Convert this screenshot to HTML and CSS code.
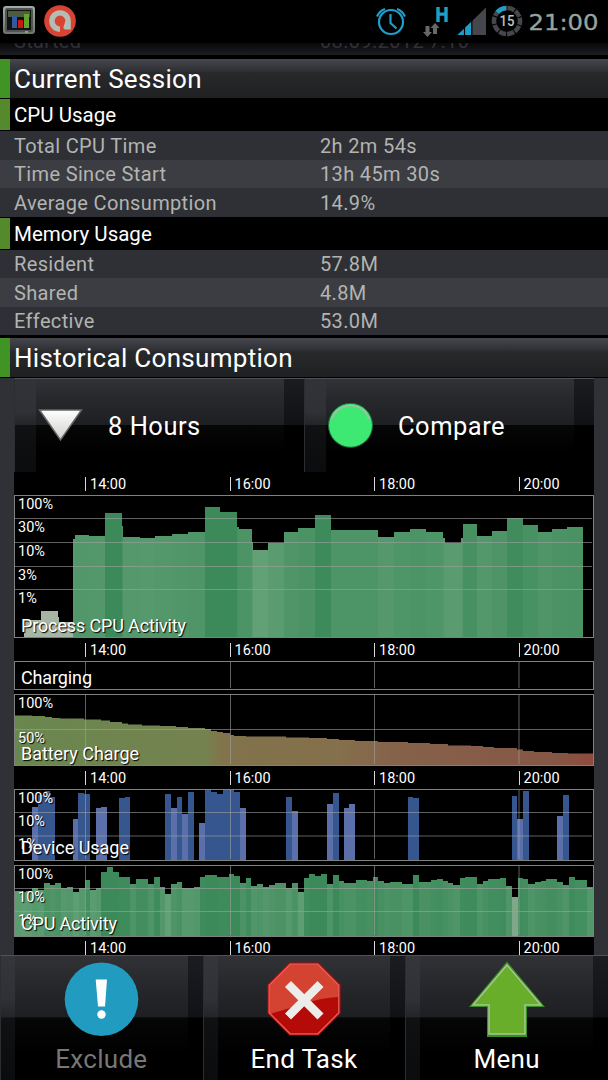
FILE: index.html
```html
<!DOCTYPE html>
<html lang="en">
<head>
  <meta charset="UTF-8">
  <meta name="viewport" content="width=device-width, initial-scale=1.0">
  <title>Process Details</title>
  <link rel="stylesheet" href="styles.css">
</head>
<body>
  <header class="status-bar">
    <div class="status-group">
      <svg width="34" height="30" viewBox="0 0 34 30">
        <defs>
          <linearGradient id="frame" x1="0" y1="0" x2="0" y2="1">
            <stop offset="0" stop-color="#a2aaa6"/>
            <stop offset="1" stop-color="#6c7370"/>
          </linearGradient>
        </defs>
        <rect x="1" y="1" width="32" height="28" rx="3" fill="url(#frame)"/>
        <rect x="3" y="3" width="28" height="24" rx="2" fill="#505553"/>
        <rect x="5" y="5" width="24" height="20" fill="#101311"/>
        <rect x="6" y="6" width="22" height="6" fill="#4e5c3c"/>
        <rect x="10" y="11" width="5" height="12" fill="#31599e"/>
        <rect x="16" y="15" width="5" height="8" fill="#c91a12"/>
        <rect x="22" y="9" width="5" height="14" fill="#62a52c"/>
        <rect x="23" y="26" width="3" height="2" fill="#8caf3e"/>
      </svg>
      <svg width="32" height="32" viewBox="0 0 32 32">
        <circle cx="16" cy="16" r="15.8" fill="#d94334"/>
        <circle cx="16" cy="16" r="8.1" fill="none" stroke="#b4bdb4" stroke-width="5.4" stroke-dasharray="38.2 12.7" transform="rotate(90 16 16)"/>
        <path d="M21.4 15.900H26.800V24.500H21.400Q19.400 24.500 19.400 22Z" fill="#b4bdb4"/>
      </svg>
    </div>
    <svg class="status-icons" width="240" height="43" viewBox="368 0 240 43">
      <g fill="none" stroke="#1e9fca" stroke-width="2.2">
        <circle cx="391" cy="22" r="12"/>
        <path d="M390.5 14V23L396.500 28.500M377 16.500Q379.500 11 385 9M405 16.500Q402.500 11 397 9"/>
      </g>
      <path d="M436.300 7h3.400v5.500h4.600V7h3.400v15h-3.400v-6.300h-4.600V22h-3.400z" fill="#1e9fca"/>
      <path d="M425.500 26h4v6h2.500l-4.500 5-4.500-5h2.500zM433 34h4v-6h2.500l-4.500-5-4.500 5h2.500z" fill="#66696a"/>
      <path d="M457.500 35L486 7.500V35z" fill="#46474c"/>
      <path d="M457.500 35L471.500 21.500V35z" fill="#1e9fca"/>
      <path d="M464.500 26V35M471.800 20V35" stroke="#000" stroke-width="1.200"/>
      <circle cx="507" cy="21" r="13" fill="none" stroke="#46474c" stroke-width="4.600" stroke-dasharray="7.150 1.019" transform="rotate(-87 507 21)"/>
      <path d="M497.300 12.300A13 13 0 0 1 506 8" fill="none" stroke="#1e9fca" stroke-width="4.600"/>
      <text x="499.500" y="26" class="battery-text" textLength="15" lengthAdjust="spacingAndGlyphs">15</text>
      <text x="528.500" y="29.500" class="clock-text" textLength="70" lengthAdjust="spacingAndGlyphs">21:00</text>
    </svg>
  </header>

  <main>
    <div class="row row-cut"><span>Started</span><span>08.09.2012 7:10</span></div>

    <h2 class="section-title">Current Session</h2>
    <h3 class="sub-title">CPU Usage</h3>
    <div class="rows">
      <div class="row"><span>Total CPU Time</span><span>2h 2m 54s</span></div>
      <div class="row"><span>Time Since Start</span><span>13h 45m 30s</span></div>
      <div class="row"><span>Average Consumption</span><span>14.9%</span></div>
    </div>
    <h3 class="sub-title">Memory Usage</h3>
    <div class="rows">
      <div class="row"><span>Resident</span><span>57.8M</span></div>
      <div class="row"><span>Shared</span><span>4.8M</span></div>
      <div class="row"><span>Effective</span><span>53.0M</span></div>
    </div>

    <h2 class="section-title history-title">Historical Consumption</h2>
    <div class="history">
      <div class="panel-buttons">
        <button class="panel-button">
          <svg width="46" height="46" viewBox="0 0 46 46">
            <defs>
              <linearGradient id="tri" x1="0" y1="0" x2="0" y2="1">
                <stop offset="0" stop-color="#fff"/>
                <stop offset="1" stop-color="#cfcfcb"/>
              </linearGradient>
            </defs>
            <path d="M2.500 7H44.500L23.500 37Z" fill="url(#tri)" stroke="#666" stroke-width="1.500"/>
          </svg>
          <span>8 Hours</span>
        </button>
        <button class="panel-button">
          <svg width="46" height="46" viewBox="0 0 46 46">
            <circle cx="23.500" cy="22.300" r="22" fill="#3de873" stroke="#1d6b38" stroke-width="1"/>
            <path d="M5 16A19.500 19.500 0 0 1 42 16" fill="none" stroke="#9cc0a3" stroke-width="1.800"/>
          </svg>
          <span>Compare</span>
        </button>
      </div>

      <div class="axis"><span>14:00</span><span>16:00</span><span>18:00</span><span>20:00</span></div>

      <div class="charts">
        <svg width="580" height="143" viewBox="14 495 580 143">
          <g id="process-bars"></g>
          <path class="grid" d="M15 518.500H592M15 542.500H592M15 566.500H592M15 589.500H592"/>
          <rect class="frame" x="14.500" y="495.500" width="579" height="142"/>
          <g class="scale">
            <text x="18" y="509">100%</text>
            <text x="18" y="532">30%</text>
            <text x="18" y="555.500">10%</text>
            <text x="18" y="580">3%</text>
            <text x="18" y="602.500">1%</text>
          </g>
          <text class="name" x="21" y="632" textLength="165">Process CPU Activity</text>
        </svg>
      </div>

      <div class="axis"><span>14:00</span><span>16:00</span><span>18:00</span><span>20:00</span></div>

      <div class="charts">
        <svg width="580" height="29" viewBox="14 661 580 29">
          <path class="grid" d="M85.500 662V688M230.500 662V688M374.500 662V688M519 662V688"/>
          <rect class="frame" x="14.500" y="661.500" width="579" height="28"/>
          <text class="name" x="21" y="683.500" textLength="71">Charging</text>
        </svg>

        <svg width="580" height="72" viewBox="14 694 580 72">
          <defs>
            <linearGradient id="charge" gradientUnits="userSpaceOnUse" x1="14" y1="0" x2="594" y2="0">
              <stop offset="0" stop-color="#69874f"/>
              <stop offset=".33" stop-color="#75824f"/>
              <stop offset=".36" stop-color="#81734b"/>
              <stop offset=".56" stop-color="#84704c"/>
              <stop offset=".66" stop-color="#85624a"/>
              <stop offset=".93" stop-color="#855746"/>
              <stop offset="1" stop-color="#8f4a3c"/>
            </linearGradient>
          </defs>
          <path id="battery-area" fill="url(#charge)"/>
          <path class="grid" d="M15 729.500H592M85.500 695V764M230.500 695V764M374.500 695V764M519 695V764"/>
          <rect class="frame" x="14.500" y="694.500" width="579" height="71"/>
          <g class="scale">
            <text x="18" y="708">100%</text>
            <text x="18" y="742.500">50%</text>
          </g>
          <text class="name" x="21" y="759.500" textLength="118">Battery Charge</text>
        </svg>
      </div>

      <div class="axis"><span>14:00</span><span>16:00</span><span>18:00</span><span>20:00</span></div>

      <div class="charts">
        <svg width="580" height="72" viewBox="14 789 580 72">
          <g id="device-bars"></g>
          <path class="grid" d="M15 812.500H592M15 836H592M85.500 790V859M230.500 790V859M374.500 790V859M519 790V859"/>
          <rect class="frame" x="14.500" y="789.500" width="579" height="71"/>
          <g class="scale">
            <text x="18" y="802.500">100%</text>
            <text x="18" y="825.500">10%</text>
            <text x="18" y="849">1%</text>
          </g>
          <text class="name" x="21" y="854" textLength="108">Device Usage</text>
        </svg>

        <svg width="580" height="72" viewBox="14 865 580 72">
          <g id="cpu-bars"></g>
          <path class="grid" d="M15 888.500H592M15 911.500H592M85.500 866V935M230.500 866V935M374.500 866V935M519 866V935"/>
          <rect class="frame" x="14.500" y="865.500" width="579" height="71"/>
          <g class="scale">
            <text x="18" y="878.500">100%</text>
            <text x="18" y="901.500">10%</text>
            <text x="18" y="925">1%</text>
          </g>
          <text class="name" x="21" y="930" textLength="96">CPU Activity</text>
        </svg>
      </div>

      <div class="axis axis-last"><span>14:00</span><span>16:00</span><span>18:00</span><span>20:00</span></div>
    </div>
  </main>

  <nav class="actions">
    <button class="action disabled">
      <svg width="76" height="76" viewBox="0 0 76 76">
        <circle cx="38.500" cy="38.300" r="36.800" fill="#219bbf"/>
        <path d="M32.700 18.500H44L42 45.500H35Z" fill="#fff"/>
        <circle cx="38.500" cy="53.500" r="4.200" fill="#fff"/>
      </svg>
      <span>Exclude</span>
    </button>
    <button class="action">
      <svg width="76" height="76" viewBox="0 0 76 76">
        <path d="M23.500 1.500H52.500L74.500 23.500V52.500L52.500 74.500H23.500L1.500 52.500V23.500Z" fill="#b40a08"/>
        <path d="M24.200 3.500H51.800L72.500 24.200V36Q55 37 40 42T3.500 53V24.200Z" fill="#d44232"/>
        <path d="M24.200 3.200H51.800L72.800 24.200V51.800L51.800 72.800H24.200L3.200 51.800V24.200Z" fill="none" stroke="#e2605a" stroke-width="1.300"/>
        <path d="M22 23L54.500 55.500M54.500 23L22 55.500" stroke="#ececea" stroke-width="8.500"/>
      </svg>
      <span>End Task</span>
    </button>
    <button class="action">
      <svg width="76" height="76" viewBox="0 0 76 76">
        <path d="M38 .5L76 46H58V76H18V46H0Z" fill="#3a8f22"/>
        <path d="M38 4L72 44H56V73H20V44H4Z" fill="#68ae2b" stroke="#a9c596" stroke-width="1.500"/>
      </svg>
      <span>Menu</span>
    </button>
  </nav>

  <script src="script.js"></script>
</body>
</html>
```
FILE: styles.css
```css
:root {
  --accent: #3f9425;
  --panel: #303136;
  --text: #ffffff;
  --muted: #b2b4b0;
}

* {
  box-sizing: border-box;
}

body {
  margin: 0;
  width: 608px;
  height: 1080px;
  overflow: hidden;
  display: flex;
  flex-direction: column;
  background: #000;
  color: var(--text);
  font-family: Roboto, "Liberation Sans", sans-serif;
}

button {
  font-family: inherit;
  color: inherit;
  border: none;
  padding: 0;
}

svg {
  display: block;
  flex: none;
}

.status-bar {
  height: 43px;
  flex: none;
  display: flex;
  justify-content: space-between;
}

.status-group {
  display: flex;
  align-items: flex-start;
  gap: 8px;
  padding: 5px 0 0 2px;
}

.battery-text {
  font-size: 15px;
  font-weight: 500;
  fill: #b9c4ba;
}

.clock-text {
  font-family: "DejaVu Sans", sans-serif;
  font-size: 20.5px;
  fill: #97a39b;
  stroke: #97a39b;
  stroke-width: 0.3px;
}

main {
  height: 912px;
  flex: none;
  overflow: hidden;
}

.row {
  display: flex;
  align-items: center;
  height: 28.5px;
  padding: 1px 0 0 14px;
  background: #2f3036;
  color: var(--muted);
  font-size: 20px;
  letter-spacing: 0.35px;
}

.row span:first-child {
  width: 306px;
}

.row:nth-child(even) {
  background: #3c3d43;
}

.rows {
  border-top: 1px solid #000;
}

.row.row-cut {
  height: 12px;
  align-items: flex-end;
  overflow: hidden;
  padding-bottom: 2px;
  color: #303135;
  background: linear-gradient(#08080a, #1d1e22);
  margin-bottom: 4px;
  line-height: 24px;
}

.section-title {
  margin: 0;
  height: 39px;
  line-height: 41px;
  padding-left: 4px;
  border-left: 10px solid var(--accent);
  background: linear-gradient(#46474c, #303136 30%, #28292b 35%, #1f2022);
  font-size: 26px;
  font-weight: 400;
  letter-spacing: 0.3px;
}

.history-title {
  margin-top: 3px;
}

.sub-title {
  margin: 1px 0 0;
  height: 31px;
  line-height: 33px;
  padding-left: 4px;
  border-left: 10px solid #548a2c;
  font-size: 20.5px;
  font-weight: 400;
}

.history {
  margin-top: 1px;
  padding: 0 14px;
  background: var(--panel);
}

.panel-buttons {
  display: flex;
  background: #000;
}

.panel-button {
  width: 290px;
  height: 94px;
  display: flex;
  align-items: center;
  gap: 25px;
  padding: 1px 0 0 22px;
  border-top: 1px solid #505155;
  border-left: 1px solid #2c2d30;
  background:
    linear-gradient(#323338, #303136 35%, #242528 49%, #101113 50%, #0b0c0d) left / 21px 100% no-repeat,
    linear-gradient(#1b1c20, #111215 49%, #000 50%) right / 20px 100% no-repeat,
    linear-gradient(#313236, #26272a 25%, #1e1f22 49%, #060606 50%, #000 80%);
  font-size: 25.5px;
  letter-spacing: 0.5px;
}

.axis {
  display: flex;
  height: 23px;
  padding: 5px 0 0 71px;
  background: #000;
  font-size: 14.5px;
  line-height: 16px;
}

.axis span {
  flex: none;
  width: 144.5px;
  height: 14px;
  padding-left: 4px;
  border-left: 1px solid #d8d8d8;
}

.axis span:last-child {
  width: 75px;
}

.axis-last {
  height: 18px;
  padding-top: 4px;
}

.charts {
  display: flex;
  flex-direction: column;
  gap: 4px;
  background: #000;
}

.grid {
  fill: none;
  stroke: #a0a0a0;
  stroke-opacity: 0.6;
}

.frame {
  fill: none;
  stroke: #7d827e;
}

.scale {
  font-size: 14.5px;
}

.scale text,
.name {
  fill: #fff;
  text-shadow: 1px 1px 1px #000;
}

.name {
  font-size: 18px;
}

.actions {
  display: flex;
  height: 125px;
  flex: none;
}

.action {
  flex: 1;
  display: flex;
  flex-direction: column;
  align-items: center;
  padding: 5px 1px 0 0;
  border-top: 1px solid #505155;
  border-left: 1px solid #2c2d30;
  background:
    linear-gradient(#35363b, #303136 35%, #242528 49%, #101113 50%, #0b0c0d) left / 14px 100% no-repeat,
    linear-gradient(#1b1c20, #111215 49%, #000 50%) right / 15px 100% no-repeat,
    linear-gradient(#313236, #26272a 25%, #1e1f22 49%, #060606 50%, #000 80%);
  font-size: 26px;
  letter-spacing: 0.3px;
}

.action span {
  line-height: 30px;
  margin-top: 7px;
}

.action.disabled span {
  color: #777;
}
```
FILE: script.js
```js
const NS = 'http://www.w3.org/2000/svg';

function addBar(group, x, y, width, bottom, fill) {
  const rect = document.createElementNS(NS, 'rect');
  rect.setAttribute('x', x);
  rect.setAttribute('y', y);
  rect.setAttribute('width', width);
  rect.setAttribute('height', bottom - y);
  rect.setAttribute('fill', fill);
  rect.setAttribute('shape-rendering', 'crispEdges');
  group.appendChild(rect);
}

// taller bars get a deeper green
function green(t) {
  const low = [98, 160, 118];
  const high = [60, 138, 90];
  t = Math.max(0, Math.min(1, t));
  return 'rgb(' + low.map((c, i) => Math.round(c + (high[i] - c) * t)).join(',') + ')';
}

// [start x, top]; each step runs up to the next one
const process = [
  [24, 620], [41, 611], [57.5, 617], [59, 622],
  [73, 539], [74.5, 535], [89, 536], [105, 513], [122, 526], [123, 537], [140, 538],
  [155, 536], [172, 533.5], [188, 532], [205, 507], [220, 512], [237, 527], [239, 529],
  [252, 542], [253, 550], [268, 542.5], [284, 532], [298, 528], [315, 515], [331, 530],
  [378, 537], [394, 531.5], [410, 529], [426, 531.5], [443, 538], [445, 542.5], [461, 538],
  [463, 524], [477, 536], [492, 531], [507, 518], [523, 525], [538, 532], [552, 528.5],
  [567, 527], [583, 0]
];
const processGroup = document.getElementById('process-bars');
for (let i = 0; i < process.length - 1; i++) {
  const [x, y] = process[i];
  const fill = y > 600 ? '#a7b5a5' : green((550 - y) / 36);
  addBar(processGroup, x, y, process[i + 1][0] - x, 638, fill);
}

const battery = [
  [15, 715.5], [32, 716], [45, 717], [52, 718], [60, 718.5], [84, 719.5], [101, 720.5],
  [110, 722], [122, 723.5], [128, 724.5], [142, 725.5], [160, 726], [176, 727], [188, 728],
  [205, 729], [211, 731], [217, 732], [223, 733], [230, 735], [234, 736], [246, 736.5],
  [286, 737.5], [309, 738], [327, 739], [339, 740], [355, 741], [378, 742], [408, 743],
  [430, 744], [448, 745.5], [471, 746], [483, 747], [494, 748], [517, 749.5], [523, 751],
  [534, 752], [552, 753], [568, 753.5]
];
document.getElementById('battery-area').setAttribute('d',
  'M15 766' + battery.map(([x, y]) => 'H' + x + 'V' + y).join('') + 'H593V766Z');

// [x, width, top, low usage]
const device = [
  [32, 6, 807, 1], [38, 7, 795], [45, 5, 791], [50, 5, 797],
  [73, 5, 819, 1], [78, 6, 793], [84, 6, 794],
  [96, 5, 808, 1], [101, 6, 807, 1], [119, 6, 798], [125, 5, 797],
  [165, 6, 794], [171, 6, 808, 1], [177, 5, 797], [182, 6, 814, 1], [188, 6, 792],
  [199, 6, 823, 1], [205, 6, 789], [211, 6, 792], [217, 6, 794], [223, 11, 789],
  [234, 6, 792], [240, 6, 808, 1], [286, 6, 797], [292, 6, 811, 1],
  [327, 6, 804, 1], [333, 6, 793], [344, 5, 808, 1], [349, 6, 804, 1],
  [408, 5, 797], [413, 6, 798], [512, 5, 796], [517, 6, 819, 1], [523, 6, 791],
  [557, 6, 816, 1], [563, 6, 795]
];
const deviceGroup = document.getElementById('device-bars');
device.forEach(([x, w, y, low]) => addBar(deviceGroup, x, y, w, 860, low ? '#5b6fab' : '#35568f'));

const cpu = [
  [15, 891], [21, 892], [26, 891], [32, 888], [38, 890], [44, 883], [50, 885], [55, 883],
  [61, 888], [67, 887], [73, 892], [79, 888], [85, 880], [90, 890], [96, 888], [101, 872],
  [107, 867], [113, 872], [119, 877], [130, 884], [136, 879], [148, 884], [154, 877],
  [160, 887], [165, 894], [171, 884], [177, 882], [182, 888], [194, 887], [200, 877],
  [205, 875], [217, 877], [229, 874], [234, 876], [240, 883], [246, 878], [251, 886],
  [257, 884], [263, 887], [269, 885], [275, 883], [286, 888], [292, 883], [298, 892],
  [304, 878], [309, 874], [315, 876], [321, 874], [327, 884], [333, 875], [339, 881],
  [344, 883], [356, 880], [367, 881], [373, 877], [378, 881], [384, 883], [390, 882],
  [402, 884], [413, 875], [419, 882], [431, 880], [437, 879], [443, 881], [448, 883],
  [453, 885], [460, 878], [465, 877], [477, 884], [483, 881], [488, 879], [500, 878],
  [506, 886], [512, 897], [518, 878], [523, 879], [528, 884], [535, 882], [541, 881],
  [546, 879], [557, 882], [563, 885], [569, 877], [575, 880], [587, 887], [593, 0]
];
const cpuGroup = document.getElementById('cpu-bars');
for (let i = 0; i < cpu.length - 1; i++) {
  const [x, y] = cpu[i];
  const fill = y > 895 ? '#7fa889' : green((894 - y) / 18);
  addBar(cpuGroup, x, y, cpu[i + 1][0] - x, 936, fill);
}
```
